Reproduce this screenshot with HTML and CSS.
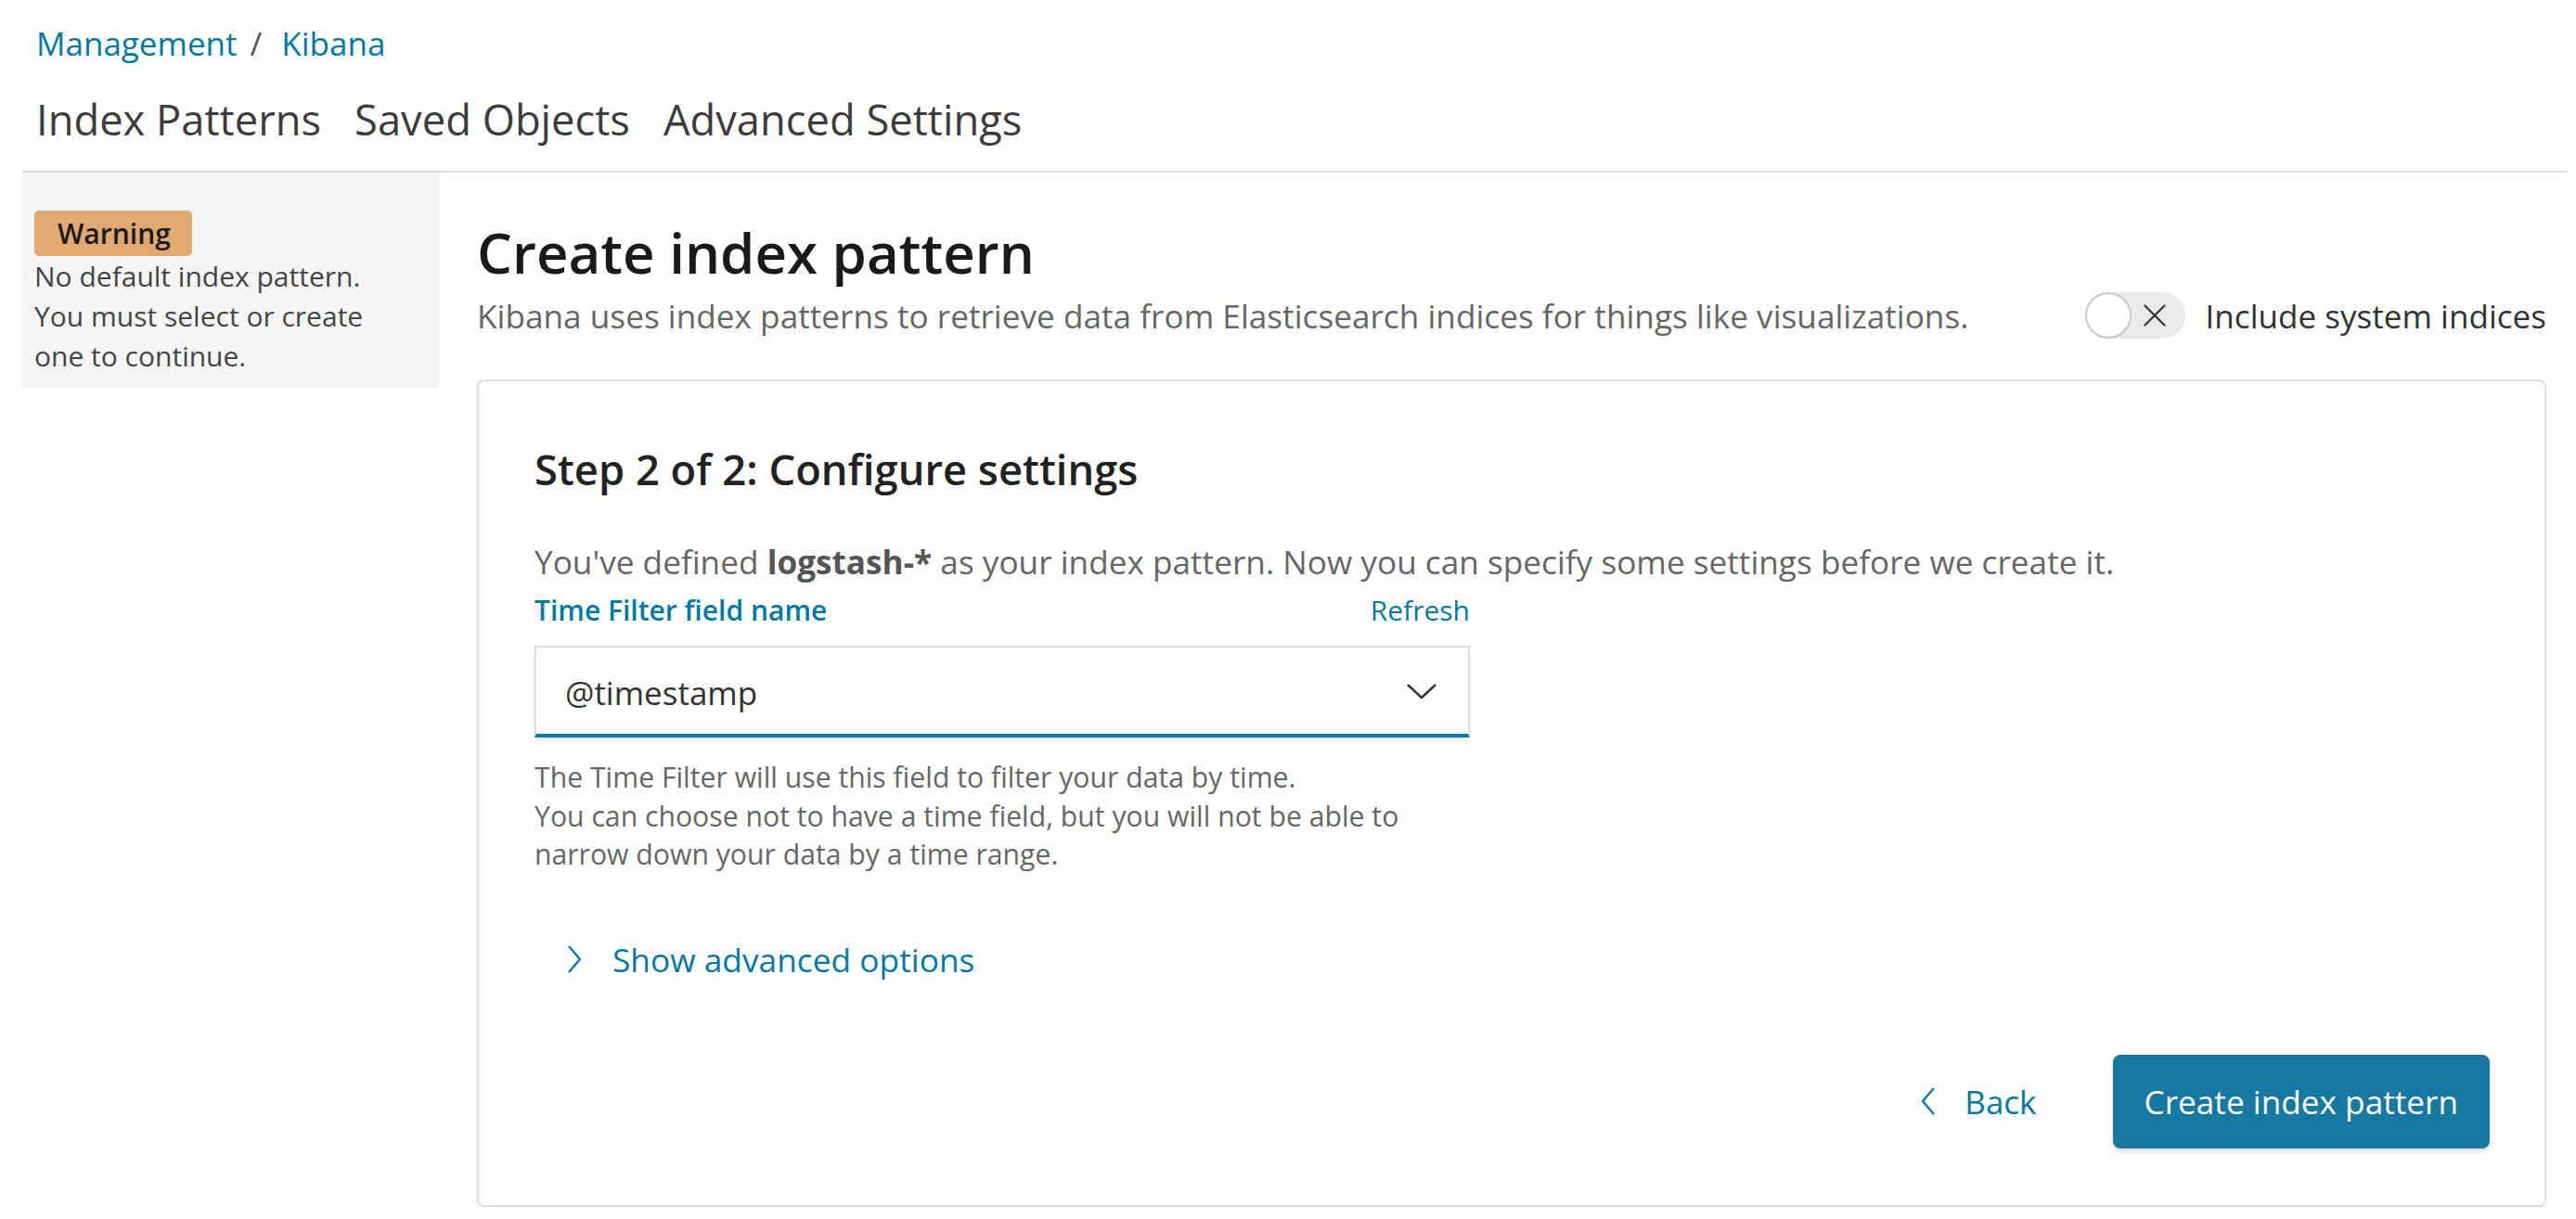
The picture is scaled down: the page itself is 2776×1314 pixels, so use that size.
FILE: index.html
```html
<!DOCTYPE html>
<html>
<head>
<meta charset="utf-8">
<link rel="stylesheet" href="styles.css">
</head>
<body>
<div class="page">
  <div class="header">
    <div class="breadcrumbs"><span class="crumb">Management</span><span class="sep">/</span><span class="crumb">Kibana</span></div>
    <div class="tabs">
      <span class="tab">Index Patterns</span>
      <span class="tab">Saved Objects</span>
      <span class="tab">Advanced Settings</span>
    </div>
  </div>
  <div class="layout">
    <div class="sidebar">
      <span class="badge">Warning</span>
      <div class="side-text">No default index pattern.<br>You must select or create<br>one to continue.</div>
    </div>
    <div class="main">
      <h1 class="title">Create index pattern</h1>
      <div class="subrow">
        <p class="subtitle">Kibana uses index patterns to retrieve data from Elasticsearch indices for things like visualizations.</p>
        <div class="toggle">
          <div class="switch">
            <span class="knob"></span>
            <svg class="switch-x" width="24" height="24" viewBox="0 0 24 24"><path d="M1.5 1.5 L22.5 22.5 M22.5 1.5 L1.5 22.5" stroke="#333" stroke-width="2.2" fill="none" stroke-linecap="round"/></svg>
          </div>
          <span class="toggle-label">Include system indices</span>
        </div>
      </div>
      <div class="card">
        <h2 class="step">Step 2 of 2: Configure settings</h2>
        <p class="desc">You've defined <b>logstash-*</b> as your index pattern. Now you can specify some settings before we create it.</p>
        <div class="field">
          <div class="label-row"><span class="label">Time Filter field name</span><span class="refresh">Refresh</span></div>
          <div class="select">
            <span class="select-value">@timestamp</span>
            <svg class="chev-down" width="34" height="18" viewBox="0 0 34 18"><path d="M2 2 L17 16 L32 2" stroke="#333" stroke-width="2.4" fill="none" stroke-linejoin="round"/></svg>
          </div>
          <div class="help">The Time Filter will use this field to filter your data by time.<br>You can choose not to have a time field, but you will not be able to<br>narrow down your data by a time range.</div>
        </div>
        <div class="advanced">
          <svg class="chev-right" width="18" height="32" viewBox="0 0 18 32"><path d="M3 2 L15 16 L3 30" stroke="#0079a5" stroke-width="2.4" fill="none" stroke-linejoin="round"/></svg>
          <span class="adv-text">Show advanced options</span>
        </div>
        <div class="actions">
          <span class="back">
            <svg class="chev-left" width="18" height="32" viewBox="0 0 18 32"><path d="M15 2 L3 16 L15 30" stroke="#0079a5" stroke-width="2.4" fill="none" stroke-linejoin="round"/></svg>
            <span>Back</span>
          </span>
          <span class="primary">Create index pattern</span>
        </div>
      </div>
    </div>
  </div>
</div>
</body>
</html>
```
FILE: styles.css
```css
html, body {
  margin: 0;
  padding: 0;
  background: #ffffff;
}
body {
  font-family: "Open Sans", "Noto Sans", sans-serif;
  color: #3f3f3f;
}
.page {
  padding: 0 9px 0 24px;
}
.header {
  padding: 23px 15px 25px;
  border-bottom: 2px solid #dedede;
}
.breadcrumbs {
  font-size: 35px;
  line-height: 48px;
  color: #0079a5;
}
.sep {
  color: #555;
  margin: 0 21px 0 14px;
}
.tabs {
  margin-top: 28px;
  display: flex;
  gap: 36px;
  font-size: 45.3px;
  line-height: 60px;
  color: #3c3c3c;
}
.layout {
  display: flex;
  align-items: flex-start;
  gap: 41px;
}
.sidebar {
  width: 449px;
  box-sizing: border-box;
  background: #f5f5f5;
  padding: 41px 13px 13px;
}
.badge {
  display: inline-block;
  background: #e2a872;
  color: #1a1a1a;
  font-size: 30px;
  font-weight: 600;
  line-height: 49px;
  height: 49px;
  padding: 0 23px 0 25px;
  border-radius: 5px;
}
.side-text {
  font-size: 30px;
  line-height: 43px;
  color: #444;
}
.main {
  flex: 1;
  margin-right: 23px;
  padding-top: 50px;
}
.title {
  margin: 0;
  font-size: 60px;
  line-height: 72px;
  font-weight: 600;
  color: #1a1a1a;
}
.subrow {
  display: flex;
  justify-content: space-between;
  align-items: center;
  margin-top: 2px;
  height: 60px;
  margin-bottom: 39px;
}
.subtitle {
  margin: 0;
  font-size: 35.2px;
  line-height: 44px;
  color: #666;
}
.toggle {
  display: flex;
  align-items: center;
  gap: 22px;
}
.switch {
  position: relative;
  width: 108px;
  height: 50px;
  border-radius: 25px;
  background: #e9e9e9;
  box-sizing: border-box;
}
.knob {
  position: absolute;
  left: 0;
  top: 0;
  width: 50px;
  height: 50px;
  box-sizing: border-box;
  border-radius: 50%;
  background: #fff;
  border: 2px solid #c8c8c8;
}
.switch-x {
  position: absolute;
  left: 63px;
  top: 13px;
}
.toggle-label {
  font-size: 35.1px;
  line-height: 48px;
  color: #333;
}
.card {
  border: 2px solid #dcdcdc;
  border-radius: 8px;
  box-shadow: 0 3px 5px rgba(0, 0, 0, 0.08);
  padding: 68px 59px 61px 60px;
}
.step {
  margin: 0;
  font-size: 45.3px;
  line-height: 54px;
  font-weight: 600;
  color: #222;
}
.desc {
  margin: 49px 0 0;
  font-size: 35.2px;
  line-height: 46px;
  color: #666;
}
.desc b {
  font-weight: 700;
  color: #555;
}
.field {
  width: 1008px;
  margin-top: 11px;
}
.label-row {
  display: flex;
  justify-content: space-between;
  font-size: 30px;
  line-height: 38px;
  color: #0079a5;
}
.label {
  font-weight: 600;
}
.select {
  margin-top: 19px;
  height: 99px;
  box-sizing: border-box;
  border: 2px solid #dddddd;
  border-bottom: 4px solid #0079a5;
  background: #fdfdfd;
  box-shadow: 0 4px 6px rgba(0, 0, 0, 0.08);
  display: flex;
  align-items: center;
  justify-content: space-between;
  padding: 0 33px 0 31px;
}
.select-value {
  font-size: 35px;
  line-height: 46px;
  color: #333;
  margin-top: 4px;
}
.help {
  margin-top: 22px;
  font-size: 30.2px;
  line-height: 41.5px;
  color: #666;
}
.advanced {
  margin-top: 69px;
  margin-left: 34px;
  display: flex;
  align-items: center;
  gap: 32px;
  font-size: 35.3px;
  line-height: 46px;
  color: #0079a5;
}
.actions {
  margin-top: 80px;
  display: flex;
  justify-content: flex-end;
  align-items: center;
  gap: 82px;
}
.back {
  display: flex;
  align-items: center;
  gap: 30px;
  font-size: 35px;
  color: #0079a5;
}
.primary {
  display: inline-block;
  height: 101px;
  line-height: 101px;
  padding: 0 34px;
  background: #1779a2;
  color: #fff;
  font-size: 35.2px;
  border-radius: 8px;
  box-shadow: 0 3px 5px rgba(0, 0, 0, 0.15);
}
```
